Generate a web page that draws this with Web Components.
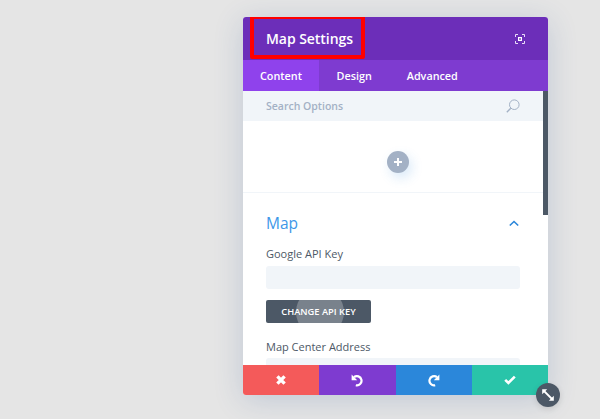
<!DOCTYPE html>
<html>
<head>
<meta charset="utf-8">
<title>Map Settings</title>
<style>
    html, body { margin: 0; height: 100%; }
    body {
        background: #e5e5e5;
        font-family: "Open Sans", "Liberation Sans", sans-serif;
        overflow: hidden;
        padding: 17px 0 0 243px;
        box-sizing: border-box;
    }
</style>
</head>
<body>
<settings-modal>
    <modal-header slot="header" title-text="Map Settings"></modal-header>
    <modal-tabs slot="tabs"></modal-tabs>
    <search-bar slot="search"></search-bar>
    <add-row slot="body"></add-row>
    <map-section slot="body"></map-section>
    <modal-footer slot="footer"></modal-footer>
</settings-modal>

<script>
class SettingsModal extends HTMLElement {
    connectedCallback() {
        this.attachShadow({mode: 'open'});
        this.shadowRoot.innerHTML = `
            <style>
                :host {
                    display: block;
                    position: relative;
                    width: 305px;
                    height: 378px;
                    border-radius: 3px;
                    background: #fff;
                    box-shadow: 0 5px 30px rgba(43, 87, 151, .2);
                }
                .wrap { display: flex; flex-direction: column; height: 100%; border-radius: 3px; overflow: hidden; }
                .scroll { flex: 1; min-height: 0; overflow: hidden; position: relative; }
                .thumb { position: absolute; top: 74px; right: 0; width: 5px; height: 124px; background: #4c5866; }
                .resize {
                    position: absolute; right: -12px; bottom: -12px;
                    width: 24px; height: 24px; border-radius: 50%;
                    background: #4c5866;
                    display: flex; align-items: center; justify-content: center;
                    box-shadow: 0 2px 6px rgba(0, 0, 0, .12);
                }
            </style>
            <div class="wrap">
                <slot name="header"></slot>
                <slot name="tabs"></slot>
                <slot name="search"></slot>
                <div class="scroll"><slot name="body"></slot></div>
                <slot name="footer"></slot>
            </div>
            <div class="thumb"></div>
            <div class="resize">
                <svg width="14" height="14" viewBox="0 0 14 14" fill="none" stroke="#fff" stroke-width="1.8">
                    <path d="M3 3L11 11"/>
                    <path d="M1.2 6.2V1.2H6.2z" fill="#fff" stroke="none"/>
                    <path d="M12.8 7.8V12.8H7.8z" fill="#fff" stroke="none"/>
                </svg>
            </div>
        `;
    }
}

class ModalHeader extends HTMLElement {
    connectedCallback() {
        this.attachShadow({mode: 'open'});
        this.shadowRoot.innerHTML = `
            <style>
                :host {
                    display: flex;
                    align-items: center;
                    justify-content: space-between;
                    position: relative;
                    height: 43px;
                    padding: 0 23px;
                    box-sizing: border-box;
                    background: #6c2eb9;
                    color: #fff;
                }
                h1 { margin: 0; font-size: 14px; font-weight: 600; letter-spacing: -.05px; }
                svg { display: block; }
                .callout {
                    position: absolute; left: 7px; top: -2px;
                    width: 115px; height: 44px;
                    box-sizing: border-box;
                    border: 4px solid #f00;
                    border-radius: 2px;
                }
            </style>
            <h1>${this.getAttribute('title-text')}</h1>
            <svg width="10" height="10" viewBox="0 0 10 10" fill="none" stroke="#e9dcf8" stroke-width="1">
                <path d="M.5 3V.5H3M7 .5H9.5V3M9.5 7V9.5H7M3 9.5H.5V7"/>
                <rect x="3" y="3" width="4" height="4" fill="#fff" stroke="none"/>
                <rect x="4.2" y="4.2" width="1.6" height="1.6" fill="#6c2eb9" stroke="none"/>
            </svg>
            <div class="callout"></div>
        `;
    }
}

class ModalTabs extends HTMLElement {
    connectedCallback() {
        this.attachShadow({mode: 'open'});
        this.shadowRoot.innerHTML = `
            <style>
                :host {
                    display: flex;
                    height: 31px;
                    background: #7e3bd0;
                    color: #fff;
                    font-size: 10.8px;
                    font-weight: 600;
                }
                div { display: flex; align-items: center; justify-content: center; padding: 0 17.5px; }
                .active { width: 76px; padding: 0; box-sizing: border-box; background: #8f42ec; }
            </style>
            <div class="active">Content</div>
            <div>Design</div>
            <div>Advanced</div>
        `;
    }
}

class SearchBar extends HTMLElement {
    connectedCallback() {
        this.attachShadow({mode: 'open'});
        this.shadowRoot.innerHTML = `
            <style>
                :host {
                    display: flex;
                    align-items: center;
                    justify-content: space-between;
                    height: 30px;
                    padding: 0 28px 0 23px;
                    box-sizing: border-box;
                    background: #f1f5f9;
                    color: #a3b1c5;
                    font-size: 10.5px;
                    font-weight: 600;
                }
                svg { display: block; }
            </style>
            <span>Search Options</span>
            <svg width="14" height="14" viewBox="0 0 14 14" fill="none" stroke="#a3b1c5">
                <circle cx="8.3" cy="5.7" r="4.8" stroke-width="1"/>
                <path d="M4.8 9.2L.8 13.2" stroke-width="1.4"/>
            </svg>
        `;
    }
}

class AddRow extends HTMLElement {
    connectedCallback() {
        this.attachShadow({mode: 'open'});
        this.shadowRoot.innerHTML = `
            <style>
                :host {
                    display: flex;
                    align-items: center;
                    justify-content: center;
                    height: 72px;
                    padding: 10px 0 0 5px;
                    box-sizing: border-box;
                    border-bottom: 1px solid #f1f5f9;
                }
                .plus {
                    width: 22px; height: 22px; border-radius: 50%;
                    background: #a3b1c5;
                    box-shadow: 3px 5px 12px rgba(43, 135, 218, .18);
                    display: flex; align-items: center; justify-content: center;
                }
                svg { display: block; }
            </style>
            <div class="plus">
                <svg width="8" height="8" viewBox="0 0 8 8" fill="#fff"><path d="M3 0h2v3h3v2H5v3H3V5H0V3h3z"/></svg>
            </div>
        `;
    }
}

class MapSection extends HTMLElement {
    connectedCallback() {
        this.attachShadow({mode: 'open'});
        this.shadowRoot.innerHTML = `
            <style>
                :host {
                    display: block;
                    padding: 17px 28px 0 23px;
                    color: #4c5866;
                    font-size: 11px;
                    font-weight: 500;
                }
                .head { display: flex; align-items: center; justify-content: space-between; height: 25px; }
                h2 { margin: 0; font-size: 15.5px; font-weight: 400; color: #3e97e8; }
                svg { display: block; }
                .chev { margin-right: 1px; margin-top: 1px; }
                label { display: block; height: 16px; line-height: 16px; }
                .first { margin-top: 11px; }
                .field { height: 23px; margin-top: 4px; border-radius: 3px; background: #f1f5f9; }
                .second { margin-top: 16px; }
                .second + .field { margin-top: 3px; }
                .btn {
                    position: relative;
                    display: flex; align-items: center; justify-content: center;
                    width: 105px; height: 23px; margin-top: 11px;
                    border-radius: 2px;
                    overflow: hidden;
                    background: #4c5866;
                    color: #fff;
                    font-size: 9.3px;
                    font-weight: 600;
                    text-transform: uppercase;
                }
                .ripple {
                    position: absolute; left: 30px; top: -12px;
                    width: 48px; height: 48px; border-radius: 50%;
                    background: rgba(255, 255, 255, .25);
                }
                span { position: relative; }
            </style>
            <div class="head">
                <h2>Map</h2>
                <svg class="chev" width="10" height="7" viewBox="0 0 10 7" fill="none" stroke="#2b87da" stroke-width="1.6">
                    <path d="M.8 5.5L5 1.5L9.2 5.5"/>
                </svg>
            </div>
            <label class="first">Google API Key</label>
            <div class="field"></div>
            <div class="btn"><div class="ripple"></div><span>Change API Key</span></div>
            <label class="second">Map Center Address</label>
            <div class="field"></div>
        `;
    }
}

class ModalFooter extends HTMLElement {
    connectedCallback() {
        this.attachShadow({mode: 'open'});
        this.shadowRoot.innerHTML = `
            <style>
                :host { display: flex; height: 30px; position: relative; }
                div { flex: 1; display: flex; align-items: center; justify-content: center; }
                .close { background: #f45a5a; }
                .undo { background: #7e3bd0; }
                .redo { background: #2b87da; }
                .save { background: #29c4a9; }
                svg { display: block; }
            </style>
            <div class="close">
                <svg width="12" height="12" viewBox="0 0 12 12" fill="none" stroke="#fff" stroke-width="3.4"><path d="M2.4 2.4L9.6 9.6M9.6 2.4L2.4 9.6"/></svg>
            </div>
            <div class="undo">
                <svg width="13" height="13" viewBox="0 0 13 13" fill="none">
                    <path d="M3 3.2A4.6 4.6 0 1 1 4.8 11.2" stroke="#fff" stroke-width="2.2"/>
                    <path d="M.6 .6V6.2H6.2z" fill="#fff"/>
                </svg>
            </div>
            <div class="redo">
                <svg width="13" height="13" viewBox="0 0 13 13" fill="none">
                    <path d="M10 3.2A4.6 4.6 0 1 0 8.2 11.2" stroke="#fff" stroke-width="2.2"/>
                    <path d="M12.4 .6V6.2H6.8z" fill="#fff"/>
                </svg>
            </div>
            <div class="save">
                <svg width="12" height="10" viewBox="0 0 12 10" fill="none" stroke="#fff" stroke-width="2.6"><path d="M1.2 4.8L4.4 8L10.8 1.6"/></svg>
            </div>
        `;
    }
}

customElements.define('settings-modal', SettingsModal);
customElements.define('modal-header', ModalHeader);
customElements.define('modal-tabs', ModalTabs);
customElements.define('search-bar', SearchBar);
customElements.define('add-row', AddRow);
customElements.define('map-section', MapSection);
customElements.define('modal-footer', ModalFooter);
</script>
</body>
</html>
